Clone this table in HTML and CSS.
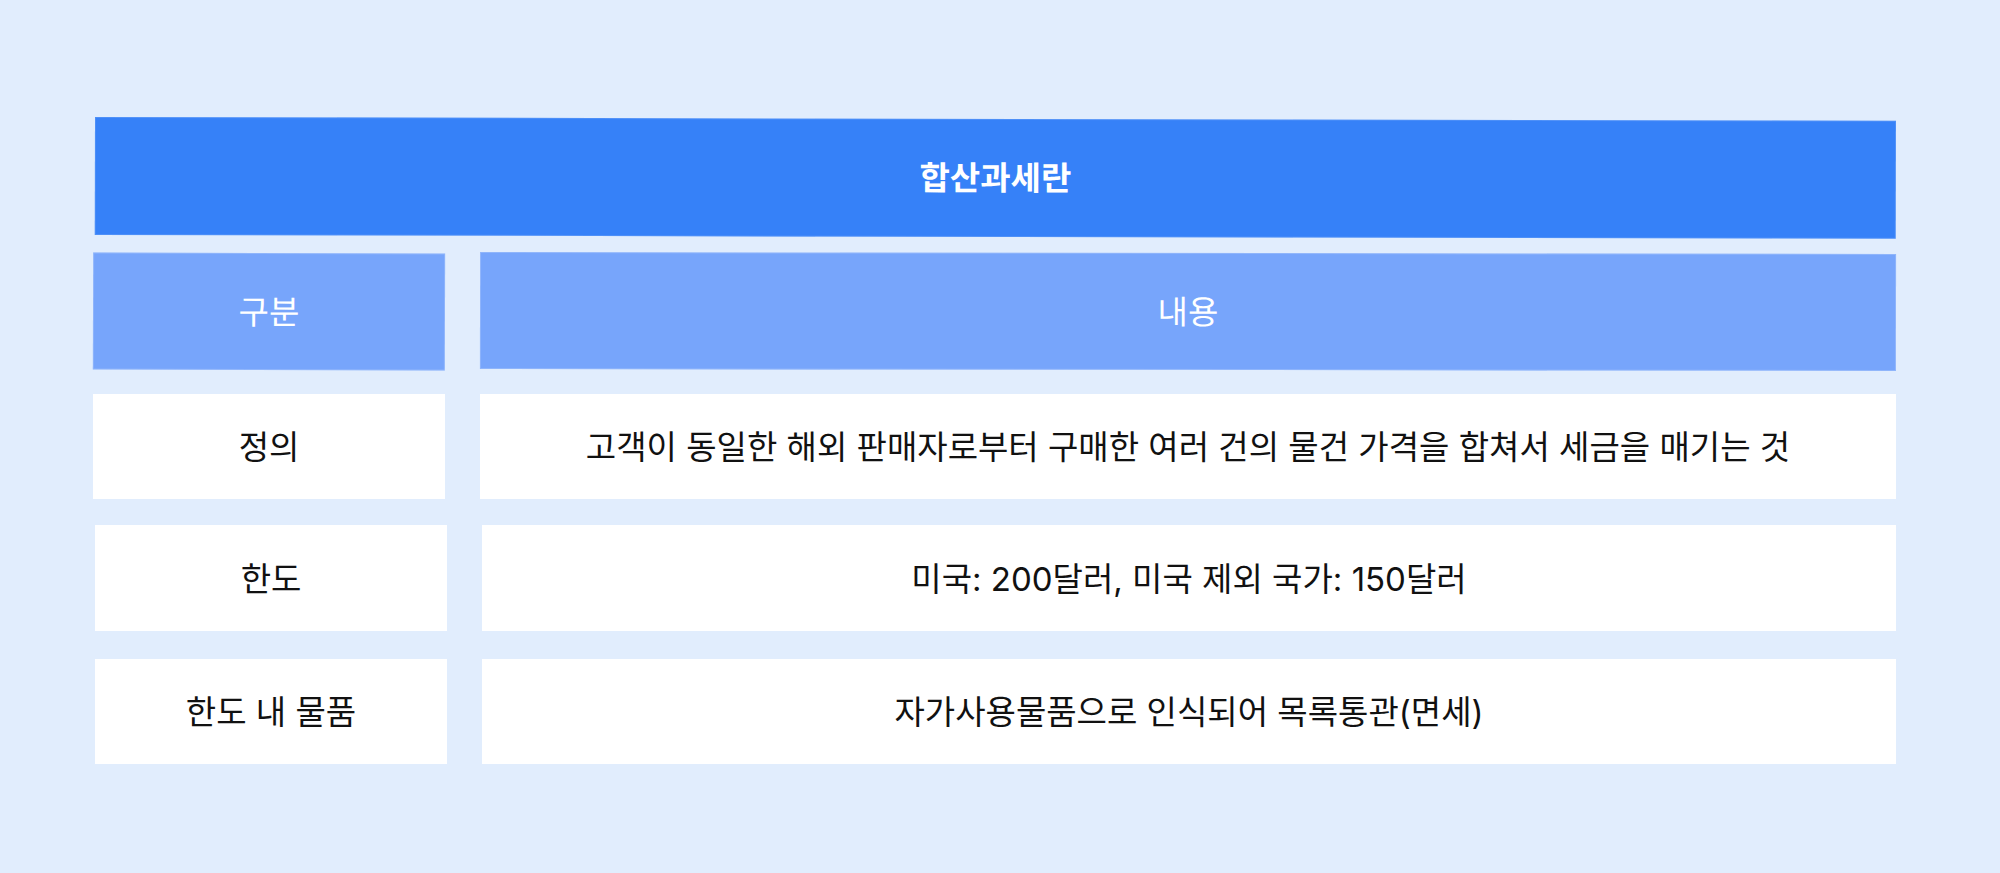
FILE: index.html
```html
<!DOCTYPE html>
<html lang="ko">
<head>
<meta charset="utf-8">
<title>합산과세란</title>
<link rel="stylesheet" href="styles.css">
</head>
<body>
<main class="page">
  <div class="title">합산과세란</div>
  <div class="row row-head">
    <div class="cell head tilt-a">구분</div>
    <div class="cell head tilt-b">내용</div>
  </div>
  <div class="row row-1">
    <div class="cell body">정의</div>
    <div class="cell body">고객이 동일한 해외 판매자로부터 구매한 여러 건의 물건 가격을 합쳐서 세금을 매기는 것</div>
  </div>
  <div class="row row-2 shift">
    <div class="cell body">한도</div>
    <div class="cell body">미국: 200달러, 미국 제외 국가: 150달러</div>
  </div>
  <div class="row row-3 shift">
    <div class="cell body">한도 내 물품</div>
    <div class="cell body">자가사용물품으로 인식되어 목록통관(면세)</div>
  </div>
</main>
</body>
</html>
```

FILE: styles.css
```css
html, body {
  margin: 0;
  padding: 0;
  background: #e1edfd;
}
body {
  width: 2000px;
  height: 873px;
  overflow: hidden;
  font-family: Inter, "Noto Sans CJK KR", sans-serif;
}
.page {
  display: flex;
  flex-direction: column;
  padding: 117px 0 0 93px;
  width: 1803px;
}
.title {
  height: 118px;
  box-sizing: border-box;
  padding-bottom: 4px;
  background: #3681f8;
  color: #fff;
  font-size: 33px;
  font-weight: 700;
  display: flex;
  align-items: center;
  justify-content: center;
  margin-left: 2px;
  transform: rotate(0.12deg);
  transform-origin: left top;
  box-shadow: inset 0 0 0 1px rgba(255,255,255,0.12);
}
.row {
  display: grid;
  grid-template-columns: 352px 1fr;
  column-gap: 35px;
}
.row-head { margin-top: 18px; height: 117px; }
.row-1 { margin-top: 24px; height: 105px; }
.row-2 { margin-top: 26px; height: 106px; }
.row-3 { margin-top: 28px; height: 105px; }
.shift { margin-left: 2px; }
.cell {
  display: flex;
  align-items: center;
  justify-content: center;
  font-size: 33px;
  box-sizing: border-box;
  padding-bottom: 3px;
}
.head {
  background: #77a5fb;
  color: #fff;
  font-weight: 400;
  box-shadow: inset 0 0 0 1px rgba(255,255,255,0.18);
}
.tilt-a { transform: rotate(0.15deg); }
.tilt-b { transform: rotate(0.08deg); }
.body {
  background: #fff;
  color: #111;
}
```
